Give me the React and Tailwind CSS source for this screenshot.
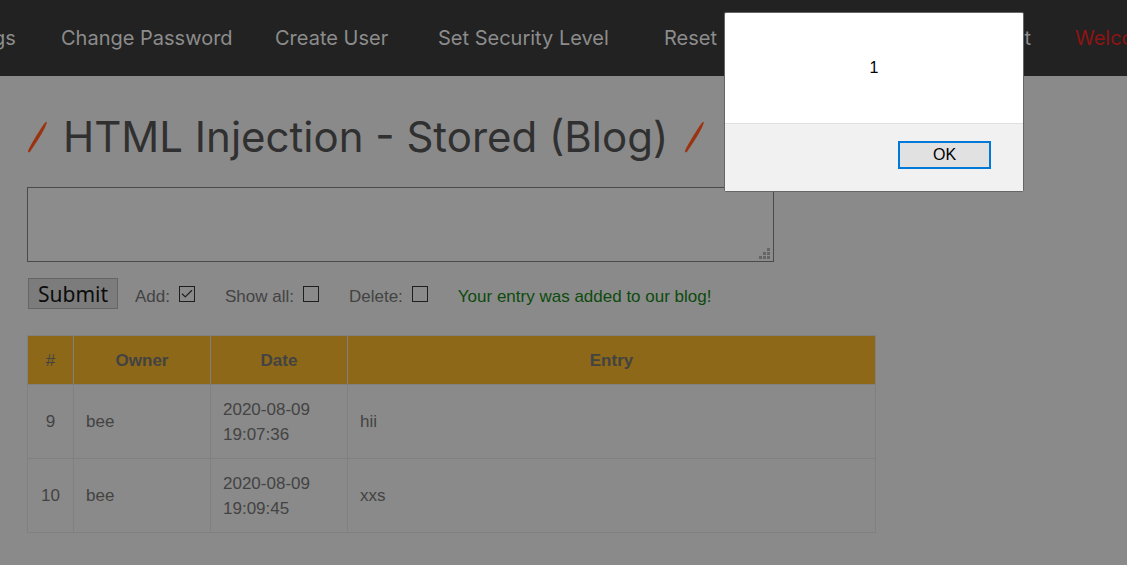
import { useState } from "react";
import { Check } from "lucide-react";

const links = ["Bugs", "Change Password", "Create User", "Set Security Level", "Reset", "Credits", "Blog", "Logout"];

const entries = [
  { id: 9, owner: "bee", date: "2020-08-09 19:07:36", text: "hii" },
  { id: 10, owner: "bee", date: "2020-08-09 19:09:45", text: "xxs" },
];

function Option({ id, label, defaultChecked }) {
  return (
    <div className="flex items-center gap-[9px]">
      <label htmlFor={id}>{label}</label>
      <span className="mb-1.5 grid size-4 place-items-center">
        <input
          id={id}
          type="checkbox"
          defaultChecked={defaultChecked}
          className="peer col-start-1 row-start-1 size-4 appearance-none border border-[#1e1e1e]"
        />
        <Check className="pointer-events-none col-start-1 row-start-1 hidden size-3.5 stroke-[#1e1e1e] stroke-2 peer-checked:block" />
      </span>
    </div>
  );
}

function Slash() {
  return (
    <svg viewBox="0 0 20 32" className="h-8 w-5 shrink-0 fill-[#9b3210]" aria-hidden="true">
      <path d="M18.800 1C19.800.800 20 1.500 19.600 2.600 17.500 8.500 13 16 9.500 21L3.200 30.500C2.300 31.800.6 31.700 1.100 29.700 4 23 9.500 14.500 13 9 15.500 5 17.300 2.200 18.800 1Z" />
    </svg>
  );
}

function AlertDialog({ onClose }) {
  return (
    <div
      role="alertdialog"
      aria-labelledby="alert-text"
      className="absolute top-3 right-[103px] w-[300px] rounded-xs border border-[#666] bg-white text-black"
    >
      <p id="alert-text" className="flex h-[110px] items-center justify-center text-base">1</p>
      <div className="flex justify-end border-t border-[#dfdfdf] bg-[#f1f1f1] px-8 pt-[17px] pb-[22px]">
        <button
          type="button"
          onClick={onClose}
          className="h-7 w-[93px] border-2 border-[#0078d7] bg-[#e1e1e1] text-base leading-6"
        >
          OK
        </button>
      </div>
    </div>
  );
}

export default function App() {
  const [open, setOpen] = useState(true);
  return (
    <div className="relative min-h-screen overflow-hidden bg-[#8a8a8a] font-['Liberation_Sans',Arial,sans-serif] text-[17px] leading-[25px] text-[#434343]">
      <header className="overflow-hidden bg-[#222] font-['Inter',sans-serif] text-xl text-[#8c8c8c]">
        <nav className="-ml-8 grid h-[76px] grid-cols-[93px_214px_163px_226px_99px_117px_85px_110px_140px] items-center whitespace-nowrap">
          {links.map((name) => (
            <a key={name} href="#">{name}</a>
          ))}
          <span className="text-[#8e1414]">Welcome Bee</span>
        </nav>
      </header>

      <main className="px-[27px] pt-8">
        <h1 className="flex items-center gap-4 font-['Inter',sans-serif] text-[42px] leading-[58px] font-normal whitespace-nowrap text-[#303030]">
          <Slash />
          HTML Injection - Stored (Blog)
          <Slash />
        </h1>

        <form className="mt-[21px]" onSubmit={(e) => e.preventDefault()}>
          <div className="relative w-[747px] max-w-full">
            <textarea
              aria-label="Blog entry"
              className="block h-[75px] w-full resize-none border border-[#4a4a4a] bg-[#8c8c8c] p-1"
            />
            <svg viewBox="0 0 11 11" className="pointer-events-none absolute right-1 bottom-[3px] size-[11px] fill-[#666]" aria-hidden="true">
              <path d="M8 0h3v3h-3zM4 4h3v3h-3zM8 4h3v3h-3zM0 8h3v3h-3zM4 8h3v3h-3zM8 8h3v3h-3z" />
            </svg>
          </div>
          <div className="mt-4 flex items-center pl-px">
            <button
              type="submit"
              className="mr-[17px] h-[31px] w-[90px] border border-[#656565] bg-[#7c7c7c] font-['Noto_Sans',sans-serif] text-[21px] leading-7 text-[#0c0c0c]"
            >
              Submit
            </button>
            <div className="flex items-center gap-[30px] pt-1.5">
              <Option id="add" label="Add:" defaultChecked />
              <Option id="all" label="Show all:" />
              <Option id="delete" label="Delete:" />
              <p className="text-[#0d4a0d]">Your entry was added to our blog!</p>
            </div>
          </div>
        </form>

        <table className="mt-[26px] w-[849px] max-w-full table-fixed border-collapse">
          <colgroup>
            <col className="w-[46px]" />
            <col className="w-[137px]" />
            <col className="w-[137px]" />
            <col />
          </colgroup>
          <thead>
            <tr className="h-[49px] bg-[#8c6818]">
              {["#", "Owner", "Date", "Entry"].map((name) => (
                <th key={name} scope="col" className="border border-[#808080] text-center font-bold first:font-normal">
                  {name}
                </th>
              ))}
            </tr>
          </thead>
          <tbody>
            {entries.map((row) => (
              <tr key={row.id} className="h-[74px]">
                <td className="border border-[#808080] text-center">{row.id}</td>
                <td className="border border-[#808080] px-3">{row.owner}</td>
                <td className="border border-[#808080] pr-8 pl-3">{row.date}</td>
                <td className="border border-[#808080] px-3">{row.text}</td>
              </tr>
            ))}
          </tbody>
        </table>
      </main>

      {open && <AlertDialog onClose={() => setOpen(false)} />}
    </div>
  );
}
